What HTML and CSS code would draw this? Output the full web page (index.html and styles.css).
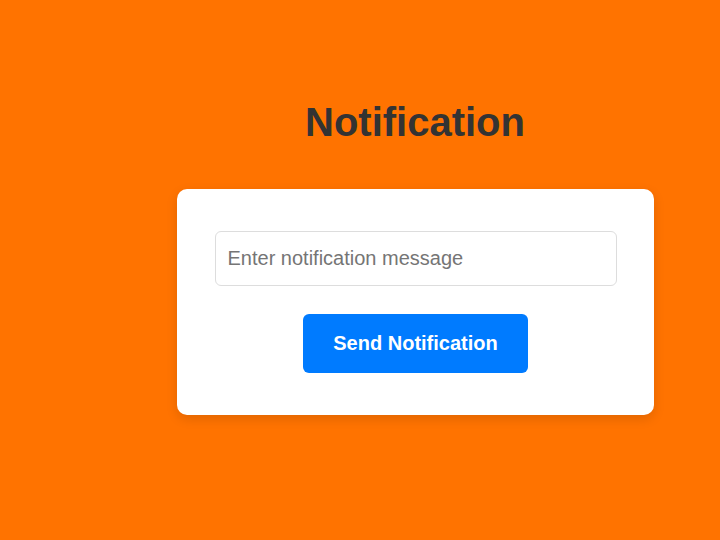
FILE: index.html
```html
<!DOCTYPE html>
<html>
<head>
<meta charset="utf-8">
<link rel="stylesheet" href="styles.css">
</head>
<body>
<div class="page">
  <h1 class="title">Notification</h1>
  <div class="card">
    <input class="field" type="text" placeholder="Enter notification message">
    <button class="send">Send Notification</button>
  </div>
</div>
</body>
</html>
```
FILE: styles.css
```css
html, body {
  margin: 0;
  padding: 0;
}
body {
  background: #ff7300;
  font-family: "Liberation Sans", Arial, sans-serif;
  width: 720px;
  height: 540px;
}
.page {
  display: flex;
  flex-direction: column;
  align-items: center;
  padding-left: 110px;
  padding-top: 97px;
}
.title {
  margin: 0;
  font-size: 40px;
  line-height: 50px;
  font-weight: bold;
  color: #333;
}
.card {
  margin-top: 42px;
  width: 477px;
  box-sizing: border-box;
  background: #fff;
  border-radius: 10px;
  padding: 42px 37px 42px 38px;
  display: flex;
  flex-direction: column;
  align-items: center;
  box-shadow: 0 4px 12px rgba(0, 0, 0, 0.12);
}
.field {
  width: 100%;
  height: 55px;
  box-sizing: border-box;
  border: 1px solid #ddd;
  border-radius: 6px;
  padding: 0 12px;
  font-family: "Liberation Sans", Arial, sans-serif;
  font-size: 20px;
  color: #333;
  outline: none;
}
.field::placeholder {
  color: #757575;
}
.send {
  margin-top: 28px;
  width: 225px;
  height: 59px;
  border: none;
  border-radius: 6px;
  background: #007bff;
  color: #fff;
  font-family: "Liberation Sans", Arial, sans-serif;
  font-size: 20px;
  font-weight: bold;
}
```
